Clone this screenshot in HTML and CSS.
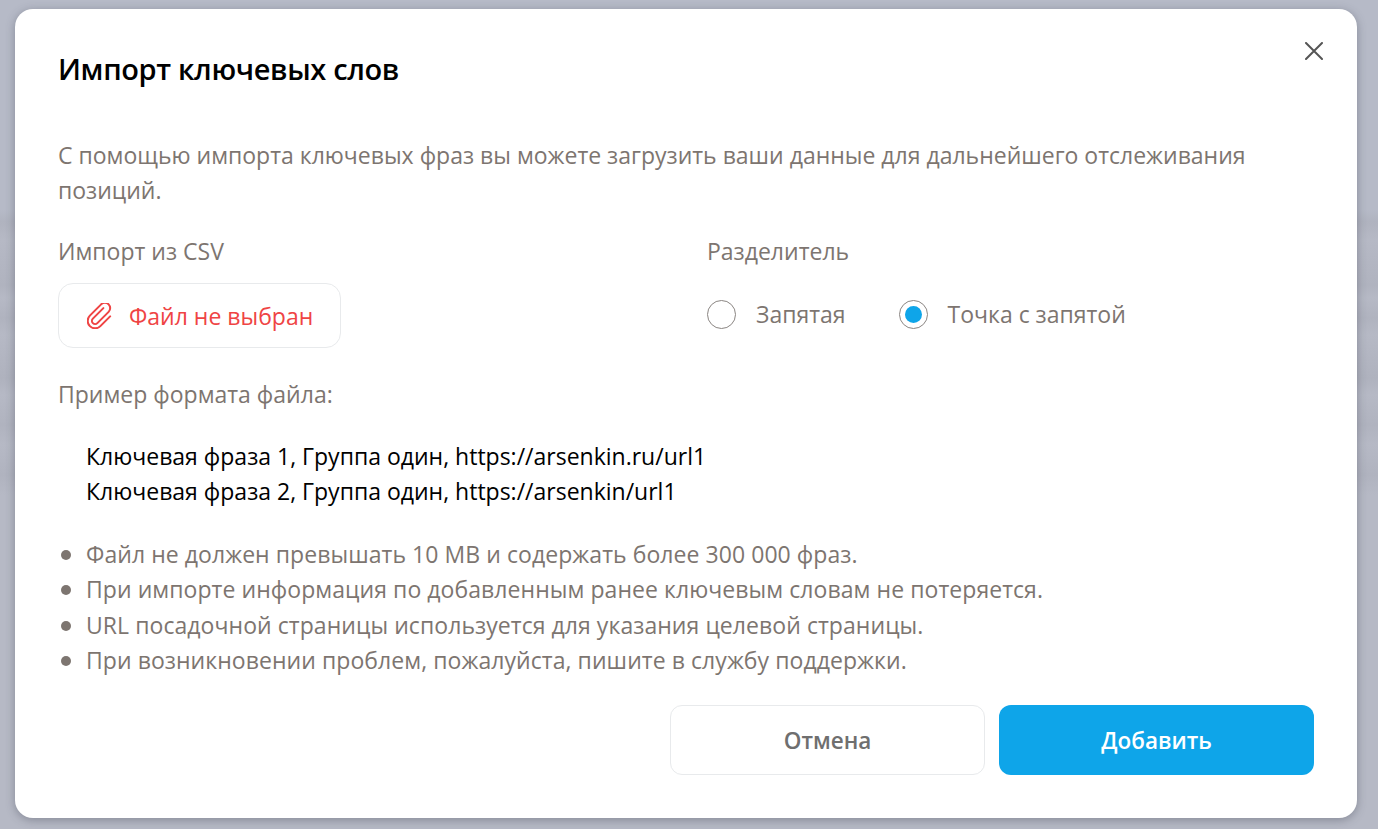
FILE: index.html
```html
<!DOCTYPE html>
<html lang="ru">
<head>
<meta charset="utf-8">
<title>Импорт ключевых слов</title>
<link rel="stylesheet" href="styles.css">
</head>
<body>
<div class="overlay">
  <div class="modal">
    <button class="close" aria-label="Закрыть">
      <svg width="18" height="18" viewBox="0 0 18 18" fill="none"><path d="M1 1L17 17M17 1L1 17" stroke="#555" stroke-width="2" stroke-linecap="round"/></svg>
    </button>
    <h1 class="title">Импорт ключевых слов</h1>
    <p class="intro">С помощью импорта ключевых фраз вы можете загрузить ваши данные для дальнейшего отслеживания позиций.</p>
    <div class="columns">
      <div class="col">
        <div class="label">Импорт из CSV</div>
        <div class="file">
          <svg class="clip" width="26" height="26" viewBox="-12.250 -12.250 24.500 24.500" fill="none"><g transform="rotate(45) translate(-13 -15.500)"><path d="M10 8V22a3 3 0 0 0 6 0V7a5 5 0 0 0-10 0V22a7 7 0 0 0 14 0V9" stroke="#ef4444" stroke-width="1.900" stroke-linecap="round" stroke-linejoin="round"/></g></svg>
          <span>Файл не выбран</span>
        </div>
      </div>
      <div class="col">
        <div class="label">Разделитель</div>
        <div class="radios">
          <label class="radio"><span class="dot"></span>Запятая</label>
          <label class="radio"><span class="dot on"></span>Точка с запятой</label>
        </div>
      </div>
    </div>
    <div class="label example">Пример формата файла:</div>
    <div class="sample">
      <div>Ключевая фраза 1, Группа один, https://arsenkin.ru/url1</div>
      <div>Ключевая фраза 2, Группа один, https://arsenkin/url1</div>
    </div>
    <ul class="notes">
      <li>Файл не должен превышать 10 MB и содержать более 300 000 фраз.</li>
      <li>При импорте информация по добавленным ранее ключевым словам не потеряется.</li>
      <li>URL посадочной страницы используется для указания целевой страницы.</li>
      <li>При возникновении проблем, пожалуйста, пишите в службу поддержки.</li>
    </ul>
    <div class="actions">
      <button class="btn cancel">Отмена</button>
      <button class="btn add">Добавить</button>
    </div>
  </div>
</div>
</body>
</html>
```
FILE: styles.css
```css
* { box-sizing: border-box; }
html, body { margin: 0; height: 100%; overflow: hidden; }
body { font-family: "Open Sans", "Noto Sans", sans-serif; background: #b8bbc7; }
.overlay { height: 829px; padding: 9px 21px 11px 15px; background: linear-gradient(180deg, #b6bac7 0, #b6bac7 210px, #b0b3bf 222px, #b6b9c5 240px, #b0b3bf 285px, #b6b9c5 298px, #b0b3bf 318px, #b6b9c5 335px, #afb2be 378px, #b6b9c5 395px, #b0b3bf 425px, #b6b9c5 445px, #b0b3bf 475px, #b6b9c5 495px, #b6b9c5 829px); }
.modal { position: relative; height: 809px; background: #fff; border-radius: 18px; padding: 40px 43px 0 43px; box-shadow: 0 2px 10px rgba(60,64,80,.4); }
.close { position: absolute; top: 33px; right: 34px; padding: 0; width: 18px; height: 18px; border: 0; background: none; display: flex; }
.title { margin: 0; font-size: 29px; line-height: 40px; font-weight: 600; color: #000; letter-spacing: -.35px; }
.intro { margin: 49px 0 0; font-size: 23px; line-height: 35px; color: #7d7570; }
.columns { display: grid; grid-template-columns: 649px 1fr; margin-top: 25px; }
.label { font-size: 23px; line-height: 36px; color: #7d7570; }
.file { margin-top: 14px; width: 283px; height: 65px; border: 1px solid #e8eaec; border-radius: 15px; display: flex; align-items: center; padding-left: 28px; gap: 16px; color: #ef4444; font-size: 23px; }
.radios { display: flex; gap: 53px; margin-top: 27px; }
.radio { display: flex; align-items: center; gap: 20px; font-size: 23px; line-height: 36px; color: #7d7570; }
.dot { width: 29px; height: 29px; border: 1.5px solid #8a8582; border-radius: 50%; background: #fff; display: flex; align-items: center; justify-content: center; }
.dot.on::after { content: ""; width: 17px; height: 17px; border-radius: 50%; background: #0ea5e9; }
.example { margin-top: 28px; }
.sample { margin-top: 27px; padding-left: 28px; font-size: 23px; line-height: 35px; color: #000; }
.notes { list-style: none; margin: 28px 0 0; padding: 0 0 0 28px; font-size: 23px; line-height: 35.300px; color: #7d7570; letter-spacing: .06px; }
.notes li { position: relative; }
.notes li::before { content: ""; position: absolute; left: -25px; top: 13px; width: 10px; height: 10px; border-radius: 50%; background: #7d7570; }
.actions { display: flex; justify-content: flex-end; gap: 14px; margin-top: 27px; }
.btn { width: 315px; height: 70px; border-radius: 12px; font-family: inherit; font-size: 22.500px; font-weight: 600; padding: 0; }
.cancel { background: #fff; border: 1px solid #e8eaec; color: #6f6f6f; }
.add { background: #0ea5e9; border: 0; color: #fff; }
```
